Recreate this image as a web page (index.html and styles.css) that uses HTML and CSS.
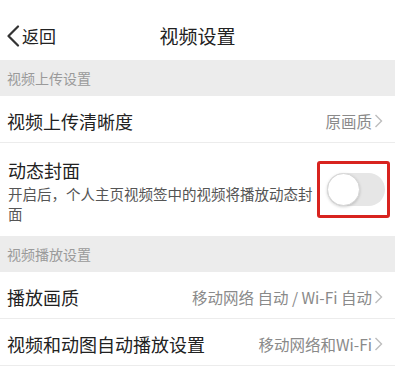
FILE: index.html
```html
<!DOCTYPE html>
<html lang="zh-CN">
<head>
<meta charset="utf-8">
<title>视频设置</title>
<link rel="stylesheet" href="styles.css">
</head>
<body>
<div class="page">
  <header class="nav">
    <div class="back">
      <svg class="back-icon" width="14" height="22" viewBox="0 0 14 22"><path d="M12 1.5 L2.5 11 L12 20.5" fill="none" stroke="#333" stroke-width="2.2" stroke-linecap="round" stroke-linejoin="round"/></svg>
      <span class="back-text">返回</span>
    </div>
    <h1 class="title">视频设置</h1>
  </header>

  <div class="section">视频上传设置</div>
  <div class="row row-line">
    <span class="row-title">视频上传清晰度</span>
    <span class="row-value">原画质<svg class="chev" width="9" height="14" viewBox="0 0 9 14"><path d="M1.5 1 L7.5 7 L1.5 13" fill="none" stroke="#bdbdbd" stroke-width="1.4"/></svg></span>
  </div>
  <div class="row-toggle">
    <div class="toggle-text">
      <div class="row-title">动态封面</div>
      <div class="row-desc">开启后，个人主页视频签中的视频将播放动态封面</div>
    </div>
    <div class="mark">
      <div class="switch"><div class="knob"></div></div>
    </div>
  </div>

  <div class="section">视频播放设置</div>
  <div class="row row-line">
    <span class="row-title">播放画质</span>
    <span class="row-value">移动网络 自动 / Wi-Fi 自动<svg class="chev" width="9" height="14" viewBox="0 0 9 14"><path d="M1.5 1 L7.5 7 L1.5 13" fill="none" stroke="#bdbdbd" stroke-width="1.4"/></svg></span>
  </div>
  <div class="row row-line">
    <span class="row-title">视频和动图自动播放设置</span>
    <span class="row-value">移动网络和Wi-Fi<svg class="chev" width="9" height="14" viewBox="0 0 9 14"><path d="M1.5 1 L7.5 7 L1.5 13" fill="none" stroke="#bdbdbd" stroke-width="1.4"/></svg></span>
  </div>
</div>
</body>
</html>
```

FILE: styles.css
```css
* { box-sizing: border-box; }
html, body { margin: 0; padding: 0; background: #fff; }
body {
  font-family: "Noto Sans CJK SC", "Noto Sans", sans-serif;
  color: #222;
  width: 395px;
  height: 368px;
  overflow: hidden;
}
.page { display: flex; flex-direction: column; }

.nav {
  position: relative;
  height: 60px;
  padding-top: 12px;
  display: flex;
  align-items: center;
  justify-content: center;
}
.back {
  position: absolute;
  left: 6px;
  top: 25px;
  display: flex;
  align-items: center;
  gap: 2px;
}
.back-icon { display: block; }
.back-text { font-size: 17px; line-height: 22px; color: #222; }
.title {
  margin: 0;
  font-size: 19px;
  font-weight: normal;
  line-height: 26px;
  color: #222;
}

.section {
  height: 36px;
  background: #ececec;
  padding-left: 7px;
  padding-top: 1px;
  font-size: 14px;
  line-height: 35px;
  color: #9a9a9a;
}

.row {
  height: 47px;
  display: flex;
  align-items: center;
  justify-content: space-between;
  padding: 3px 12px 0 7px;
}
.row-line { border-bottom: 1px solid #ececec; }
.row-title { font-size: 18px; line-height: 24px; color: #222; }
.row-value {
  display: flex;
  align-items: center;
  font-size: 15.5px;
  line-height: 22px;
  color: #8a8a8a;
}
.chev { display: block; margin-left: 2px; }

.row-toggle {
  height: 93px;
  display: flex;
  align-items: center;
  padding: 0 5px 0 8px;
}
.toggle-text { flex: 1; padding-top: 2px; }
.row-desc {
  margin-top: 2px;
  font-size: 14.5px;
  line-height: 19.5px;
  color: #555;
}
.mark {
  width: 73px;
  height: 57px;
  border: 3px solid #d8231f;
  border-radius: 3px;
  display: flex;
  align-items: center;
  justify-content: flex-end;
  padding-right: 2px;
}
.switch {
  position: relative;
  width: 58px;
  height: 33px;
  border-radius: 17px;
  background: #e6e6e6;
}
.knob {
  position: absolute;
  left: 0;
  top: 0;
  width: 33px;
  height: 33px;
  border-radius: 50%;
  background: #fff;
  border: 1px solid #d6d6d6;
  box-shadow: 0 1px 3px rgba(0,0,0,0.18);
}
```
